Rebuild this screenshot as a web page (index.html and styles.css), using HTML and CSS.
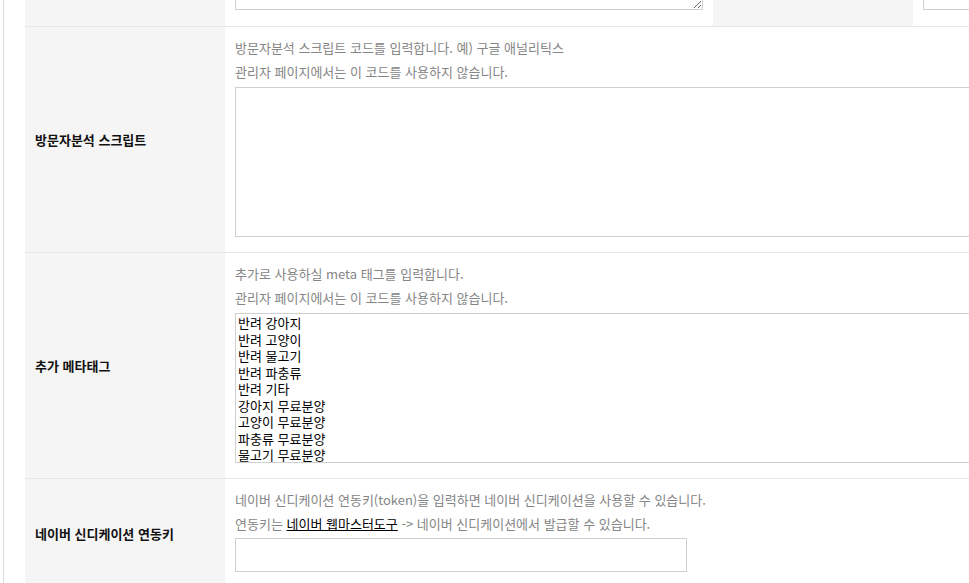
FILE: index.html
```html
<!DOCTYPE html>
<html lang="ko">
<head>
<meta charset="utf-8">
<title>설정</title>
<link rel="stylesheet" href="styles.css">
</head>
<body>
<div class="wrap">
  <table class="frm">
    <colgroup>
      <col class="c-th">
      <col class="c-td">
      <col class="c-th">
      <col class="c-td2">
    </colgroup>
    <tbody>
      <tr class="row-first">
        <th></th>
        <td><textarea class="ta-top"></textarea></td>
        <th></th>
        <td><input type="text" class="inp-top"></td>
      </tr>
      <tr>
        <th>방문자분석 스크립트</th>
        <td colspan="3">
          <div class="help">
            <p>방문자분석 스크립트 코드를 입력합니다. 예) 구글 애널리틱스</p>
            <p>관리자 페이지에서는 이 코드를 사용하지 않습니다.</p>
          </div>
          <textarea class="ta-big"></textarea>
        </td>
      </tr>
      <tr>
        <th>추가 메타태그</th>
        <td colspan="3">
          <div class="help">
            <p>추가로 사용하실 meta 태그를 입력합니다.</p>
            <p>관리자 페이지에서는 이 코드를 사용하지 않습니다.</p>
          </div>
          <textarea class="ta-big">반려 강아지
반려 고양이
반려 물고기
반려 파충류
반려 기타
강아지 무료분양
고양이 무료분양
파충류 무료분양
물고기 무료분양</textarea>
        </td>
      </tr>
      <tr>
        <th>네이버 신디케이션 연동키</th>
        <td colspan="3">
          <div class="help">
            <p>네이버 신디케이션 연동키(token)을 입력하면 네이버 신디케이션을 사용할 수 있습니다.</p>
            <p>연동키는 <a href="#" class="link">네이버 웹마스터도구</a> -&gt; 네이버 신디케이션에서 발급할 수 있습니다.</p>
          </div>
          <input type="text" class="inp-token">
        </td>
      </tr>
    </tbody>
  </table>
</div>
</body>
</html>
```

FILE: styles.css
```css
html, body {
  margin: 0;
  padding: 0;
  background: #fff;
  overflow: hidden;
}
body {
  font-family: "Noto Sans CJK KR", "Malgun Gothic", sans-serif;
  font-size: 13px;
  color: #222;
}
.wrap {
  margin-left: 3px;
  border-left: 1px solid #dcdcdc;
  padding-left: 21px;
  height: 583px;
  overflow: hidden;
}
.frm {
  border-collapse: collapse;
  table-layout: fixed;
  width: 1200px;
  margin-top: -60px;
}
.c-th { width: 200px; }
.c-td { width: 488px; }
.c-td2 { width: 312px; }
.frm tr {
  border-bottom: 1px solid #e6e6e6;
}
.frm th {
  background: #f5f5f5;
  text-align: left;
  vertical-align: middle;
  padding: 0 10px;
  font-weight: bold;
  color: #111;
  font-size: 13px;
}
.frm td {
  padding: 9px 10px 15px;
  vertical-align: top;
}
.row-first td {
  padding: 10px 10px 16px;
}
.help p {
  margin: 0;
  line-height: 24px;
  color: #858585;
}
.link {
  color: #000;
  text-decoration: underline;
}
textarea, input {
  box-sizing: border-box;
  font-family: "Noto Sans CJK KR", "Malgun Gothic", sans-serif;
  border: 1px solid #d0d0d0;
  outline: none;
  background: #fff;
}
.ta-top {
  display: block;
  width: 100%;
  height: 60px;
}
.inp-top {
  display: block;
  width: 250px;
  height: 30px;
  margin-top: 30px;
}
.ta-big {
  display: block;
  width: 100%;
  height: 150px;
  margin-top: 3px;
  padding: 1px 2px;
  font-size: 13px;
  line-height: 16.5px;
  color: #000;
  resize: none;
  overflow: hidden;
}
.inp-token {
  display: block;
  width: 452px;
  height: 34px;
  margin-top: 2px;
}
```
